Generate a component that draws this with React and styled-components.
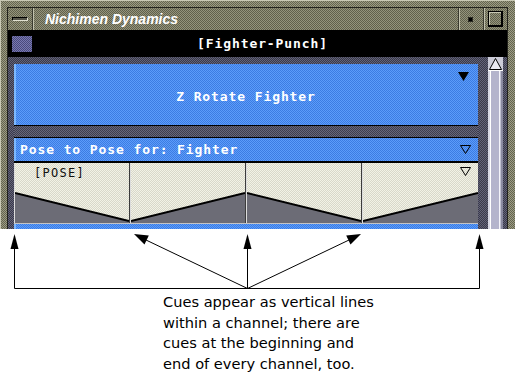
import styled, { createGlobalStyle } from "styled-components";

const dither = (a, b) => `repeating-conic-gradient(${a} 0 25%, ${b} 0 50%) 0 0 / 2px 2px`;

const Global = createGlobalStyle`
  html, body {
    margin: 0;
    padding: 0;
    background: #fff;
  }
  body {
    width: 515px;
    height: 374px;
    overflow: hidden;
  }
`;

export default function App() {
  return (
    <>
      <Global />
      <Page>
        <Window>
          <Inner>
            <TitleBar>
              <MenuButton>
                <MenuGlyph />
              </MenuButton>
              <Title>Nichimen Dynamics</Title>
              <TitleButton>
                <MinDot />
              </TitleButton>
              <TitleButton $wide>
                <MaxBox />
              </TitleButton>
            </TitleBar>
            <HeaderBar>
              <HeaderIcon />
              <HeaderTitle>[Fighter-Punch]</HeaderTitle>
            </HeaderBar>
            <Body>
              <Channels>
                <RotatePanel>
                  <span />
                  <PanelLabel>Z Rotate Fighter</PanelLabel>
                  <Corner>
                    <svg width="11" height="9" viewBox="0 0 11 9">
                      <polygon points="0,0 11,0 5.5,9" fill="#000" />
                    </svg>
                  </Corner>
                </RotatePanel>
                <Separator />
                <PoseHeader>
                  <PanelLabel>Pose to Pose for: Fighter</PanelLabel>
                  <OutlineDown />
                </PoseHeader>
                <CueRow>
                  {["down", "up", "down", "up"].map((dir, i) => (
                    <Cue key={i} $last={i === 3}>
                      <Envelope dir={dir} />
                      {i === 0 && <PoseTag>[POSE]</PoseTag>}
                      {i === 3 && (
                        <CueMark>
                          <OutlineDown />
                        </CueMark>
                      )}
                    </Cue>
                  ))}
                </CueRow>
                <BottomStrip />
              </Channels>
              <Scrollbar>
                <ScrollUp>
                  <svg width="13" height="12" viewBox="0 0 13 12">
                    <polygon points="6.5,0.5 12.5,11.5 0.5,11.5" fill="#e8e8f0" stroke="#000" strokeWidth="1" />
                  </svg>
                </ScrollUp>
                <ScrollTrack />
              </Scrollbar>
            </Body>
          </Inner>
        </Window>
        <Annotation>
          <svg width="515" height="62" viewBox="0 0 515 62">
            <g stroke="#000" strokeWidth="1" fill="none">
              <line x1="14.5" y1="59.5" x2="479.5" y2="59.5" />
              <line x1="14.5" y1="59.5" x2="14.5" y2="18" />
              <line x1="247.5" y1="59.5" x2="247.5" y2="18" />
              <line x1="479.5" y1="59.5" x2="479.5" y2="18" />
              <line x1="247.5" y1="59.5" x2="146" y2="11" />
              <line x1="247.5" y1="59.5" x2="349" y2="11" />
            </g>
            <g fill="#000">
              <polygon points="14.5,5 10.5,20 18.5,20" />
              <polygon points="247.5,5 243.5,20 251.5,20" />
              <polygon points="479.5,5 475.5,20 483.5,20" />
              <polygon points="134,5 144.5,15.6 148.8,6.5" />
              <polygon points="361,5 350.5,15.5 346.2,6.5" />
            </g>
          </svg>
          <Caption>
            Cues appear as vertical lines
            <br />
            within a channel; there are
            <br />
            cues at the beginning and
            <br />
            end of every channel, too.
          </Caption>
        </Annotation>
      </Page>
    </>
  );
}

function Envelope({ dir }) {
  const pts = dir === "down" ? "0,30 115,58 115,60 0,60" : "0,58 115,30 115,60 0,60";
  const line = dir === "down" ? "0,30 115,58" : "0,58 115,30";
  return (
    <EnvelopeSvg viewBox="0 0 115 60" preserveAspectRatio="none">
      <polygon points={pts} fill="#6c6c76" />
      <polyline points={line} fill="none" stroke="#000" strokeWidth="2" />
    </EnvelopeSvg>
  );
}

function OutlineDown() {
  return (
    <svg width="11" height="9" viewBox="0 0 11 9">
      <polygon points="0.5,0.5 10.5,0.5 5.5,8.5" fill="none" stroke="#000" strokeWidth="1" />
    </svg>
  );
}

const Page = styled.div`
  width: 515px;
  height: 374px;
  display: flex;
  flex-direction: column;
`;

const Window = styled.div`
  height: 232px;
  padding: 7px 7px 0 7px;
  box-sizing: border-box;
  background: ${dither("#9c9c84", "#64644f")};
  box-shadow: inset 1px 0 #c8c8b4, inset 0 1px #c8c8b4;
  overflow: hidden;
`;

const Inner = styled.div`
  height: 100%;
  border: 1px solid #22221c;
  border-bottom: none;
  display: flex;
  flex-direction: column;
`;

const TitleBar = styled.div`
  height: 22px;
  display: flex;
  align-items: stretch;
  background: ${dither("#94947c", "#60604c")};
`;

const MenuButton = styled.div`
  width: 24px;
  display: flex;
  align-items: center;
  justify-content: center;
  border-right: 1px solid #3a3a30;
  box-shadow: 1px 0 #c0c0ac;
`;

const MenuGlyph = styled.div`
  width: 14px;
  height: 2px;
  border: 1px solid #000;
  border-bottom-color: #e0e0d0;
  border-right-color: #e0e0d0;
  background: #55554a;
`;

const Title = styled.div`
  flex: 1;
  padding-left: 12px;
  display: flex;
  align-items: center;
  font-family: "Liberation Sans", Arial, sans-serif;
  font-weight: bold;
  font-style: italic;
  font-size: 14px;
  color: #fff;
`;

const TitleButton = styled.div`
  width: ${(p) => (p.$wide ? "23px" : "24px")};
  display: flex;
  align-items: center;
  justify-content: center;
  border-left: 1px solid #3a3a30;
  box-shadow: inset 1px 0 #c0c0ac;
`;

const MinDot = styled.div`
  width: 3px;
  height: 3px;
  background: #000;
  border: 1px solid #2a2a22;
  margin-right: 2px;
`;

const MaxBox = styled.div`
  width: 12px;
  height: 13px;
  border: 1px solid #000;
  border-right-width: 2px;
  border-bottom-width: 2px;
  box-shadow: inset 1px 1px #c8c8b4;
`;

const HeaderBar = styled.div`
  height: 27px;
  background: #000;
  display: flex;
  align-items: center;
`;

const HeaderIcon = styled.div`
  width: 20px;
  height: 16px;
  margin-left: 4px;
  background: ${dither("#7878b0", "#4a4a7c")};
`;

const HeaderTitle = styled.div`
  flex: 1;
  padding-right: 14px;
  text-align: center;
  font-family: "DejaVu Sans Mono", monospace;
  font-weight: bold;
  font-size: 13px;
  letter-spacing: 0.9px;
  color: #fff;
`;

const Body = styled.div`
  flex: 1;
  min-height: 0;
  display: flex;
  gap: 10px;
  padding: 0 4px 0 6px;
  background: ${dither("#62627a", "#3a3a48")};
`;

const Channels = styled.div`
  flex: 1;
  display: flex;
  flex-direction: column;
  padding-top: 7px;
`;

const Blue = styled.div`
  background: ${dither("#5c9cfa", "#3c7ce2")};
  box-shadow: inset 2px 0 #7cb8ff;
`;

const RotatePanel = styled(Blue)`
  height: 61px;
  display: grid;
  grid-template-columns: 20px 1fr 20px;
  align-items: center;
  padding-top: 3px;
  box-sizing: border-box;
`;

const PanelLabel = styled.div`
  font-family: "DejaVu Sans Mono", monospace;
  font-weight: bold;
  font-size: 13px;
  letter-spacing: 0.9px;
  color: #fff;
  text-align: center;
`;

const Corner = styled.div`
  align-self: start;
  margin-top: 5px;
  display: flex;
`;

const Separator = styled.div`
  height: 11px;
  border-top: 1px solid #000;
  border-bottom: 1px solid #000;
  background: ${dither("#66667a", "#3e3e4c")};
`;

const PoseHeader = styled(Blue)`
  height: 23px;
  display: flex;
  align-items: center;
  justify-content: space-between;
  padding: 0 7px 0 6px;
  border-bottom: 2px solid #000;

  svg {
    margin-top: -1px;
  }
`;

const CueRow = styled.div`
  height: 60px;
  display: grid;
  grid-template-columns: repeat(4, 1fr);
  border-bottom: 1px solid #c4c4c4;
  background: ${dither("#f2f2e6", "#d8d8ca")};
`;

const Cue = styled.div`
  display: grid;
  border-left: 1px solid #dcdcdc;
  border-right: ${(p) => (p.$last ? "none" : "1px solid #3c3c3c")};
  overflow: hidden;
`;

const EnvelopeSvg = styled.svg`
  grid-area: 1 / 1;
  width: 100%;
  height: 100%;
  display: block;
`;

const PoseTag = styled.div`
  grid-area: 1 / 1;
  align-self: start;
  justify-self: start;
  margin: 3px 0 0 19px;
  font-family: "DejaVu Sans Mono", monospace;
  font-size: 12px;
  letter-spacing: 1.3px;
  color: #111;
`;

const CueMark = styled.div`
  grid-area: 1 / 1;
  align-self: start;
  justify-self: end;
  margin: 4px 7px 0 0;
  display: flex;
`;

const BottomStrip = styled(Blue)`
  flex: 1;
`;

const Scrollbar = styled.div`
  width: 15px;
  display: flex;
  flex-direction: column;
`;

const ScrollUp = styled.div`
  height: 13px;
  display: flex;
  justify-content: center;
  align-items: flex-end;
  background: #ccccd8;
  border-bottom: 1px solid #fff;
`;

const ScrollTrack = styled.div`
  flex: 1;
  background: linear-gradient(
    to right,
    #d8d8e4 0 2px,
    #ffffff 2px 3px,
    #b4b4cc 3px 11px,
    #f4f4fa 11px 12px,
    #c0c0d0 12px 13px,
    #8a8aa0 13px 15px
  );
`;

const Annotation = styled.div`
  flex: 1;
  display: flex;
  flex-direction: column;

  svg {
    display: block;
  }
`;

const Caption = styled.div`
  margin-top: 1px;
  padding-left: 163px;
  font-family: "DejaVu Sans", sans-serif;
  font-size: 14.6px;
  line-height: 20.5px;
  color: #000;
`;
